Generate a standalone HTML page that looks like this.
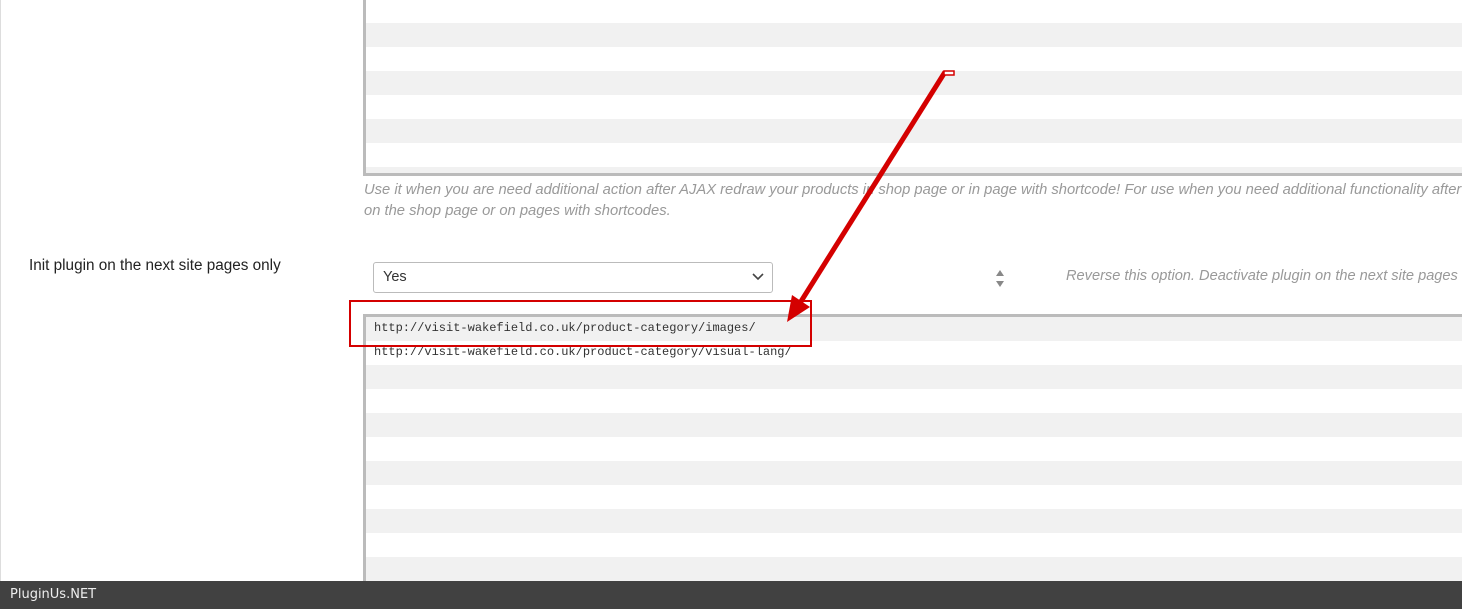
<!DOCTYPE html>
<html><head><style>
body{margin:0;width:1462px;height:609px;overflow:hidden;background:#fff;font-family:"Liberation Sans",sans-serif;position:relative}
.ta{position:absolute;left:363px;width:1110px;border-left:3px solid #bbb;
background:repeating-linear-gradient(#fff 0 24px,#f1f1f1 24px 48px)}
.desc{position:absolute;color:#999;font-style:italic;font-size:14.75px;line-height:21px}
.mono{position:absolute;font-family:"Liberation Mono",monospace;font-size:12px;color:#333}
</style></head><body>
<div style="position:absolute;left:0;top:0;width:1px;height:609px;background:#ddd"></div>
<div class="ta" style="top:-1px;height:174px;border-bottom:3px solid #bbb"></div>
<div class="desc" style="left:364px;top:180px;white-space:nowrap">Use it when you are need additional action after AJAX redraw your products in shop page or in page with shortcode! For use when you need additional functionality after<br>on the shop page or on pages with shortcodes.</div>
<div style="position:absolute;left:29px;top:257px;font-size:15.3px;color:#222">Init plugin on the next site pages only</div>
<div style="position:absolute;left:373px;top:262px;width:400px;height:31px;border:1px solid #bbb;border-radius:3px;font-size:14.5px;color:#333;line-height:29px;box-sizing:border-box;padding-left:9px">Yes
<svg style="position:absolute;right:8px;top:10px" width="12" height="8"><path d="M1 1l5 5 5-5" fill="none" stroke="#444" stroke-width="1.6"/></svg></div>
<svg style="position:absolute;left:995px;top:270px" width="10" height="18"><path d="M5 0l4 6H1z M5 17l4-6H1z" fill="#888"/></svg>
<div class="desc" style="left:1066px;top:266px;white-space:nowrap;font-size:14.6px">Reverse this option. Deactivate plugin on the next site pages</div>
<div class="ta" style="top:314px;height:280px;border-top:3px solid #bbb;background:repeating-linear-gradient(#f1f1f1 0 24px,#fff 24px 48px)"></div>
<div class="mono" style="left:374px;top:321px">http://visit-wakefield.co.uk/product-category/images/</div>
<div class="mono" style="left:374px;top:345px">http://visit-wakefield.co.uk/product-category/visual-lang/</div>
<div style="position:absolute;left:349px;top:300px;width:459px;height:43px;border:2px solid #d40000"></div>
<svg style="position:absolute;left:0;top:0" width="1462" height="609">
<path d="M945 72 L800 303" stroke="#d40000" stroke-width="5" fill="none"/>
<path d="M787 322 L792 295 L810 307 Z" fill="#d40000"/>
<rect x="944" y="71" width="10" height="4" fill="#fff" stroke="#d40000" stroke-width="1.5"/>
</svg>
<div style="position:absolute;left:0;top:581px;width:1462px;height:28px;background:#414141;color:#eee;font-family:'DejaVu Sans',sans-serif;font-size:13px;line-height:28px;padding-left:10px;box-sizing:border-box">PluginUs.NET</div>
</body></html>
